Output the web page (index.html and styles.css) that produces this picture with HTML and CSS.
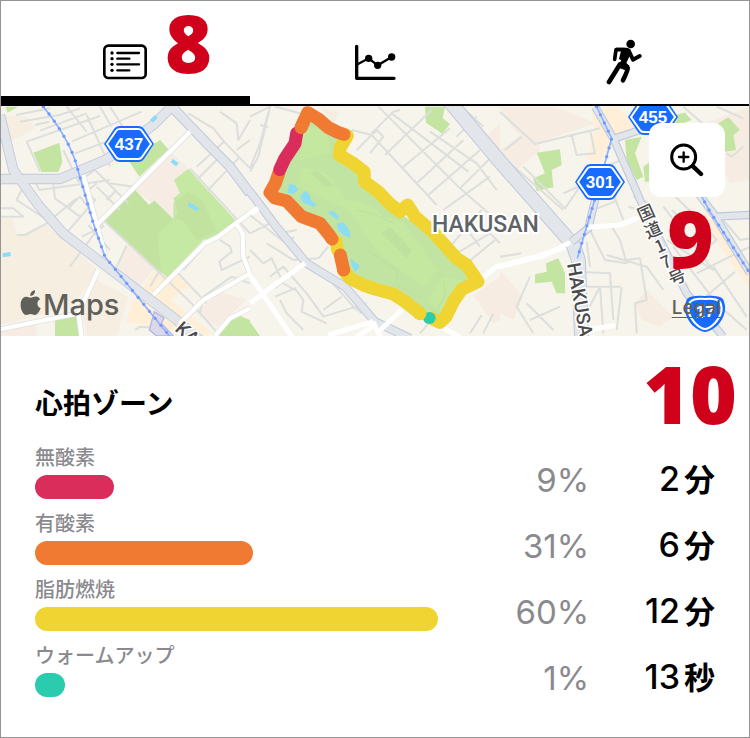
FILE: index.html
```html
<!DOCTYPE html>
<html lang="ja">
<head>
<meta charset="utf-8">
<meta name="viewport" content="width=device-width, initial-scale=1">
<title>心拍ゾーン</title>
<link rel="stylesheet" href="styles.css">
</head>
<body>
<div class="app">
  <nav class="tabs">
    <button class="tab tab-active" type="button" aria-label="概要">
      <svg class="icon" width="44" height="36" viewBox="0 0 132 108">
        <rect x="4" y="5" width="124" height="97" rx="12" fill="none" stroke="#000" stroke-width="8"/>
        <path d="M43 27h65M43 44h36M43 61h65M43 79h36" stroke="#000" stroke-width="7" stroke-linecap="round"/>
        <g><circle cx="27" cy="27" r="5"/><circle cx="27" cy="44" r="5"/><circle cx="27" cy="61" r="5"/><circle cx="27" cy="79" r="5"/></g>
      </svg>
    </button>
    <button class="tab" type="button" aria-label="グラフ">
      <svg class="icon" width="42" height="36" viewBox="0 0 126 108">
        <path d="M8 7v96h112" fill="none" stroke="#000" stroke-width="10" stroke-linecap="round" stroke-linejoin="round"/>
        <path d="M8 62 44 43 71 64 113 39" fill="none" stroke="#000" stroke-width="7"/>
        <circle cx="44" cy="43" r="11"/><circle cx="71" cy="64" r="11"/><circle cx="113" cy="39" r="11"/>
      </svg>
    </button>
    <button class="tab" type="button" aria-label="ランニング">
      <svg class="icon" width="36" height="46" viewBox="0 0 108 138">
        <circle cx="74" cy="15" r="13"/>
        <g fill="none" stroke="#000" stroke-linecap="round" stroke-linejoin="round">
          <path d="M55 32H30L26 61" stroke-width="11"/>
          <path d="M69 37 81 62 101 51" stroke-width="12"/>
          <path d="M42 76 9 129" stroke-width="14"/>
          <path d="M55 78 65 87Q66 93 51 124" stroke-width="14"/>
        </g>
        <path d="M30 26H63Q78 28 74 44L61 72 70 80 58 94 34 85 46 64 39 60 45 36H30Z"/>
      </svg>
    </button>
  </nav>

  <section class="map">
    <svg class="map-art" viewBox="1 106 748 230" preserveAspectRatio="xMidYMid slice" role="img" aria-label="コースの地図">
      <rect x="0" y="100" width="750" height="240" fill="#f7f4ec"/>
      <!-- western blocks -->
      <g transform="translate(0 100) scale(.33333)">
        <path d="M0 45 80 50 107 85 30 125 10 110ZM0 355H40L50 405 75 405 140 372 293 510 215 620 0 675Z" fill="#f6eee1"/>
        <path d="M470 190 500 145 560 200 530 365 405 270ZM383 437 465 500 420 560 350 500ZM0 690 110 665V708H0ZM585 640 660 575 740 600 650 680Z" fill="#f6ece3"/>
        <path d="M395 610 465 512 500 535 540 518 565 560 510 600 640 700 610 708 380 665Z" fill="#ffefd7"/>
        <path d="M290 540 385 590 350 708H260L240 610Z" fill="#f6eee1"/>
        <path d="M17 20H55L22 38ZM100 158 178 128 187 185 175 216H125ZM385 180 480 120 505 148 418 230ZM165 655 230 645 240 708H165ZM655 700 700 640 750 660V710H655Z" fill="#c3e5a1"/>
        <path d="M312 362 405 270 447 315 463 302 520 357 535 340 520 295 540 280 522 240 565 206 708 362 655 408 610 420 502 533Z" fill="#c5e8a2"/>
        <path d="M312 362 405 270 447 315 463 302 520 357 472 405 485 525ZM520 310 565 275 610 305 650 395 590 420 548 360 520 355Z" fill="#c0e1a0" opacity=".8"/>
        <g fill="none" stroke="#dcdfdc" stroke-width="6" stroke-linejoin="round">
          <path d="M48 45 150 25M60 65 178 45 240 25M105 75 148 65M120 92 260 40M80 125 300 48M215 125 425 35M225 160 320 125M260 45 330 200M300 20 335 80M330 20 400 130M200 20 260 95M80 125 120 215M190 150 235 245 285 210 385 310M105 245 118 270 330 240M160 250 165 295 240 350M290 250 260 275 285 300 190 410M205 325 240 290 310 380 245 410M75 250 50 300 150 365M0 325H40L70 350 0 350M50 405 75 405 140 370 230 295M320 300 350 270M265 375 330 450M290 260 360 330M312 362 210 500M380 437 350 500M565 40 640 85 672 125 750 205M660 35 710 70 715 120 750 60M672 125 590 200M710 150 750 120M620 275 720 170M590 240 650 180M330 250 400 260M570 205 750 400M312 362 570 605 660 708M530 515 620 610M550 510 625 425M660 420 690 440 695 455 658 485 665 510 750 470M610 590 600 640M610 590 695 530 750 550M450 560 480 510M405 690 420 680 480 685"/>
        </g>
        <path d="M0 45 40 210 115 315 190 400 530 660 600 720M0 237H180L320 178 460 75 535 0M520 25 630 140 690 200 750 280" fill="none" stroke="#c0c9dc" stroke-width="31"/>
        <path d="M0 45 40 210 115 315 190 400 530 660 600 720M0 237H180L320 178 460 75 535 0" fill="none" stroke="#e2e6ea" stroke-width="26"/>
        <path d="M520 25 630 140 690 200 750 280" fill="none" stroke="#e2e6ea" stroke-width="25"/>
        <g fill="none" stroke="#dfdfdc" stroke-width="17"><path d="M250 225 315 465M570 95 290 375M755 335 708 370 655 410 615 430 460 585M708 370 728 400 730 470 755 535M540 670 610 600 750 520M750 625 690 655 645 708M0 688 235 640 295 510M235 640 245 710"/></g>
        <g fill="none" stroke="#fff" stroke-width="13"><path d="M250 225 315 465M570 95 290 375M755 335 708 370 655 410 615 430 460 585M708 370 728 400 730 470 755 535M540 670 610 600 750 520M750 625 690 655 645 708M0 688 235 640 295 510M235 640 245 710"/></g>
        <path d="M448 690 463 635 492 654 484 670 520 708H470Z" fill="#dcd8e8" stroke="#b3b7e5" stroke-width="4"/>
        <path d="M130 20Q215 125 235 215L280 370 315 470 510 710" fill="none" stroke="#8fafff" stroke-width="5"/>
        <path d="M130 20Q215 125 235 215L280 370 315 470 510 710" fill="none" stroke="#6f9bff" stroke-width="10" stroke-linecap="round" stroke-dasharray="0 27"/>
        <path d="M454 64 469 49M515 182 532 194M565 312 594 329M8 466 32 462" stroke="#8adcf7" stroke-width="12"/>
      </g>
      <!-- eastern blocks -->
      <g transform="translate(500 100) scale(.33333)">
        <path d="M0 20H165L290 70 105 130 40 90ZM0 150 110 70 120 150 50 210ZM605 75 750 20V240L690 250ZM0 510 70 590 40 660 0 640ZM405 610 440 570 520 650 480 680 425 660Z" fill="#f6ece1"/>
        <path d="M275 30 350 20 440 90 340 130 300 185 260 180 285 100ZM600 290 640 350 750 510V570L620 380Z" fill="#ffefd9"/>
        <path d="M110 158 180 148 185 195 155 210 160 262 110 273 100 235 135 220ZM375 120 425 110 405 160 430 230 410 240 380 180ZM500 50 555 38 575 60 520 80ZM655 70 685 52 720 90 700 105 708 150 675 155ZM430 200 450 185V245H435ZM105 523 140 515 138 490 175 475 195 520V580H170L155 545 105 550Z" fill="#c3e5a1"/>
        <g fill="none" stroke="#dcdfdc" stroke-width="6" stroke-linejoin="round">
          <path d="M0 35 105 132 300 85M215 105 230 165 285 160 270 90M30 190 190 330M70 200 195 325 260 230M190 280 245 255M15 150 65 110M265 230 290 300M300 205 365 180 400 270M265 335 345 305 350 240M320 230 370 360M270 390 315 480 380 490 360 420 335 380M220 515 330 520 340 660M260 425 270 500M320 465 440 500 490 570M375 480 420 475 440 600 405 610 410 700M365 560 350 690M240 560 360 560M255 645 300 560 310 700M400 290 450 310M385 320 420 330M505 270 620 380M490 320 640 510 500 420M515 330 560 370M520 440 650 610 740 690M590 520 690 470 750 440M605 600 705 515M640 500 740 650M590 350 650 420 600 460M670 360 720 420 750 415M730 140 695 170 680 160M550 20 630 90M650 20 730 55M80 610 160 690M90 530 50 620 100 700M180 620 90 660M0 470 65 460"/>
        </g>
      </g>
      <!-- central blocks and park -->
      <g transform="translate(250 100) scale(.33333)">
        <path d="M670 585 750 530V660L730 670ZM215 25 270 35 250 70ZM700 120 750 70V190Z" fill="#f6ece1"/>
        <path d="M525 20H585L578 55 600 72 577 101 528 68ZM0 665 30 708H0Z" fill="#c3e5a1"/>
        <g fill="none" stroke="#dcdfdc" stroke-width="6" stroke-linejoin="round">
          <path d="M0 50 60 20 30 130 0 205M30 75 55 80M75 20 150 40M60 20 25 170 0 215M305 90 365 105 560 315M320 150 380 90 400 110 360 160M385 20 630 265 750 370M425 40 655 215M365 100 430 35 450 30M405 165 545 30M455 205 600 85M500 250 640 120M535 285 690 150M580 330 720 230M540 95 680 190 740 270M680 50 620 110M630 265 735 160M640 25 700 80M600 440 695 330M620 460 720 400 750 430M650 490 735 420M660 400 690 440M0 345 120 440 130 410M0 400 60 370 90 400 140 390M50 430 130 480 205 475M0 450 40 490 65 475 100 550 135 570M60 530 100 500 170 580 220 650 350 610M75 590 135 565 160 600 155 635 230 670M220 630 275 590M165 490 75 565M205 475 235 440M90 600 110 640 160 690M240 540 310 620 335 640M510 700 540 665M660 700 695 645M700 700 730 640"/>
        </g>
        <path d="M0 275 75 375 170 490 285 560 375 665 480 715M595 0 750 190" fill="none" stroke="#c0c9dc" stroke-width="27"/>
        <path d="M0 275 75 375 170 490 285 560 375 665 480 715" fill="none" stroke="#e2e6ea" stroke-width="21"/>
        <path d="M165 490 40 580 0 610M0 525 125 710M0 340 25 325M455 630 380 700M235 705 370 665M370 665 390 710M320 710 375 675M690 540 740 500 860 470 950 440M570 680 630 710" fill="none" stroke="#fff" stroke-width="15"/>
        <path d="M170 50 265 100 290 110 255 165 340 205 345 250 450 340 550 410 685 545 600 625 575 665 500 635 400 575 290 540 230 400 60 285 80 190Z" fill="#c2e4a2"/>
        <path d="M150 205Q210 205 240 230L290 300Q350 300 400 350L460 365 560 510 520 560 400 470Q320 380 300 330L240 305 150 260ZM530 600 580 530 640 540 580 640ZM160 90 230 75 240 160 150 180Z" fill="#c6e9a2" opacity=".65"/>
        <path d="M395 400 420 380 485 450 470 475ZM180 220 200 210 250 255 230 262Z" fill="#bfe1a0"/>
        <path d="M350 450 440 510 445 560 510 590M320 330Q380 340 430 370M580 540 585 590 560 630" fill="none" stroke="#bfe1a0" stroke-width="5"/>
        <path d="M118 252 135 255 145 270 130 282 112 278ZM150 290 165 272 180 285 182 300 200 315 190 321 160 308ZM232 336 250 333 267 350 262 361ZM261 370 280 367 296 388 302 413 282 406 265 390ZM300 474 330 497 317 516 307 501Z" fill="#8bdcf5"/>
        <g fill="none" stroke-width="39" stroke-linejoin="round" stroke-linecap="round">
          <path d="M292 107 270 145 268 165 310 190 342 215 344 245 385 275 420 312 450 335 473 315 495 350 548 395 620 475 650 495 684 545 635 568 610 605 588 650 570 667 545 655M510 640 465 605 430 582 375 567 340 555 300 535 280 510M258 425 263 450" stroke="#f0d432"/>
          <path d="M153 83 173 38 205 57 235 83 264 97 282 103M86 220 76 250 60 278 75 294 110 303 155 350 210 370 238 405 246 417M271 465 281 510" stroke="#f17a33"/>
          <path d="M140 100 135 130 105 175 89 209" stroke="#da2d5b"/>
          <path d="M153 83 160 67" stroke="#f17a33"/>
        </g>
        <ellipse cx="538" cy="654" rx="19" ry="18" fill="#2bccae"/>
        <path d="M508 640 510 641" stroke="#f0d432" stroke-width="39" stroke-linecap="round"/>
      </g>
      <!-- eastern roads -->
      <g transform="translate(500 100) scale(.33333)" fill="none">
        <path d="M-155 0 0 185 220 435 235 480 245 720" stroke="#c0c9dc" stroke-width="45"/>
        <path d="M-155 0 0 185 220 435 235 480 245 720" stroke="#e2e6ea" stroke-width="39"/>
        <path d="M215 425 265 385 290 280M285 20 340 115 425 310 560 580 670 710M330 120 480 70M560 235 640 340 750 520M640 350 750 345" stroke="#c0c9dc" stroke-width="25"/>
        <path d="M215 425 265 385 290 280M285 20 340 115 425 310 560 580 670 710M330 120 480 70M560 235 640 340 750 520M640 350 750 345" stroke="#e2e6ea" stroke-width="18"/>
        <path d="M0 500 130 468 205 430M265 382 360 375 410 355M260 690 340 677" stroke="#fff" stroke-width="15" stroke-linecap="round"/>
        <path d="M290 20 335 115 290 280 260 380 232 475M575 235 630 335 750 520" stroke="#8fafff" stroke-width="5"/>
        <path d="M290 20 335 115 290 280 260 380 232 475M575 235 630 335 750 520" stroke="#6f9bff" stroke-width="10" stroke-linecap="round" stroke-dasharray="0 27"/>
      </g>
      <defs>
        <g id="shield">
          <path d="M-25 0-15-15Q-13-18-9-18H9Q13-18 15-15L25 0 15 15Q13 18 9 18H-9Q-13 18-15 15Z" fill="#176cff"/>
          <path d="M-22 0-13-13Q-12-15-9-15H9Q12-15 13-13L22 0 13 13Q12 15 9 15H-9Q-12 15-13 13Z" fill="none" stroke="#fff" stroke-width="2"/>
        </g>
      </defs>
      <g class="shield-text">
        <use href="#shield" x="129" y="144"/><text x="129" y="150">437</text>
        <use href="#shield" x="600" y="182"/><text x="600" y="188">301</text>
        <use href="#shield" x="653" y="117"/><text x="653" y="123">455</text>
        <path d="M687 299Q691 295 705 296 719 295 723 299 729 312 718 325 710 332 705 332 700 332 692 325 681 312 687 299Z" fill="#176cff"/>
        <path d="M690 302Q694 298 705 299 716 298 720 302 725 312 715 323 709 329 705 329 701 329 695 323 685 312 690 302Z" fill="none" stroke="#fff" stroke-width="2"/>
        <text x="705" y="318">17</text>
      </g>
      <text class="place" x="432" y="232">HAKUSAN</text>
      <text class="road" transform="translate(567 264) rotate(80)">HAKUSAN</text>
      <text class="road" transform="translate(174 330) rotate(42)">KASUGA</text>
      <g class="road-ja">
        <text transform="translate(646 213) rotate(-24)" y="6">国</text>
        <text transform="translate(653 230) rotate(-24)" y="6">道</text>
        <text transform="translate(660 246) rotate(-24)" y="6">1</text>
        <text transform="translate(666 262) rotate(-24)" y="6">7</text>
        <text transform="translate(677 277) rotate(-24)" y="6">号</text>
      </g>
    </svg>
    <div class="brand">
      <svg class="apple" width="21" height="26" viewBox="0 0 63 78">
        <path d="M31 23C38 23 44 18 51 20 56 21 59 24 60 28 49 34 50 50 62 55 57 67 51 75 45 75 39 75 38 72 32 72 26 72 24 75 18 75 10 75 1 59 2 43 2 28 11 20 19 20 24 20 27 23 31 23ZM31 18C30 8 37 2 45 1 46 10 40 18 31 18Z" fill="#60605a"/>
      </svg>
      <span>Maps</span>
    </div>
    <button class="zoom" type="button" aria-label="地図を拡大">
      <svg width="34" height="34" viewBox="0 0 102 102" fill="none" stroke="#000" stroke-linecap="round">
        <circle cx="41" cy="42" r="36" stroke-width="9"/>
        <path d="M41 28v28M27 42h28" stroke-width="7"/>
        <path d="M69 70 93 93" stroke-width="13"/>
      </svg>
    </button>
    <a class="legal" href="#legal">Legal</a>
    <span class="callout callout-map">9</span>
  </section>

  <section class="zones">
    <h1 class="title">心拍ゾーン</h1>
    <table class="zone-table">
      <tbody>
        <tr><th scope="row">無酸素<span class="bar anaerobic" style="width:19.5%"></span></th><td class="share">9%</td><td class="time">2<span class="unit">分</span></td></tr>
        <tr><th scope="row">有酸素<span class="bar aerobic" style="width:54%"></span></th><td class="share">31%</td><td class="time">6<span class="unit">分</span></td></tr>
        <tr><th scope="row">脂肪燃焼<span class="bar fat-burn" style="width:100%"></span></th><td class="share">60%</td><td class="time">12<span class="unit">分</span></td></tr>
        <tr><th scope="row">ウォームアップ<span class="bar warm-up" style="width:7.5%"></span></th><td class="share">1%</td><td class="time">13<span class="unit">秒</span></td></tr>
      </tbody>
    </table>
    <span class="callout callout-zones">10</span>
  </section>
  <span class="callout callout-tabs">8</span>
</div>
</body>
</html>
```
FILE: styles.css
```css
* { box-sizing: border-box; }

body {
  margin: 0;
  background: #fff;
  color: #000;
  font-family: Inter, "Noto Sans CJK JP", sans-serif;
}

.app {
  position: relative;
  min-height: 100vh;
  border: 1px solid #949494;
}

.tabs {
  display: grid;
  grid-template-columns: repeat(3, 1fr);
  border-bottom: 2px solid #000;
}

.tab {
  display: flex;
  align-items: center;
  justify-content: center;
  height: 103px;
  padding: 18px 0 0;
  border: 0;
  border-bottom: 0 solid #000;
  background: none;
}

.tab-active {
  padding-top: 26px;
  padding-right: 2px;
  border-bottom-width: 8px;
}

.icon { display: block; }

.map {
  position: relative;
  overflow: hidden;
}

.map-art {
  display: block;
  width: 100%;
  height: auto;
}

.shield-text {
  fill: #fff;
  font: 700 17px "Liberation Sans", sans-serif;
  text-anchor: middle;
}

.place {
  fill: #606366;
  stroke: #fff;
  stroke-width: 4px;
  paint-order: stroke;
  font: 500 23px Roboto, sans-serif;
}

.road,
.road-ja {
  fill: #4c4c4c;
  stroke: #fff;
  stroke-width: 3px;
  paint-order: stroke;
  font: 500 19px Roboto, sans-serif;
}

.road-ja {
  font: 500 17px "Noto Sans CJK JP", sans-serif;
  text-anchor: middle;
}

.brand {
  position: absolute;
  left: 19px;
  bottom: 13px;
  display: flex;
  align-items: center;
  gap: 2px;
  color: #60605a;
  font-size: 29px;
  font-weight: 500;
  line-height: 36px;
}

.apple { margin-bottom: 4px; }

.zoom {
  position: absolute;
  top: 17px;
  right: 24px;
  display: grid;
  place-items: center;
  width: 76px;
  height: 74px;
  padding: 0;
  border: 0;
  border-radius: 12px;
  background: #fff;
}

.legal {
  position: absolute;
  right: 28px;
  bottom: 16px;
  color: #60605a;
  font-size: 19px;
  font-weight: 500;
  line-height: 24px;
  text-decoration-thickness: 1px;
  text-underline-offset: 3px;
}

.callout {
  position: absolute;
  color: #d0021b;
  font: 900 80px/80px "Noto Sans", sans-serif;
}

.callout-tabs { top: 1px; left: 164px; }
.callout-map { top: 91px; right: 35px; }
.callout-zones { top: 17px; right: 12px; }

.zones {
  position: relative;
  padding: 48px 34px 24px;
}

.title {
  margin: 0 0 20px;
  font-size: 28px;
  font-weight: 700;
  line-height: 40px;
}

.zone-table {
  width: 100%;
  table-layout: fixed;
  border-collapse: collapse;
}

.zone-table th {
  width: 59.3%;
  padding: 0 0 11px;
  color: #8a8a8e;
  font-size: 20px;
  font-weight: 500;
  line-height: 28px;
  text-align: left;
}

.zone-table td {
  padding: 0 0 10px;
  font-size: 34px;
  line-height: 40px;
  text-align: right;
  vertical-align: bottom;
}

.zone-table .share {
  width: 22.2%;
  color: #8a8a8e;
  font-size: 33px;
}

.zone-table .time { font-weight: 500; }

.unit {
  margin-left: 4px;
  font-size: 31px;
  font-weight: 700;
}

.bar {
  display: block;
  height: 24px;
  margin-top: 3px;
  border-radius: 12px;
}

.anaerobic { background: #da2d5b; }
.aerobic { background: #f17a33; }
.fat-burn { background: #f0d432; }
.warm-up { background: #2bccae; }
```
